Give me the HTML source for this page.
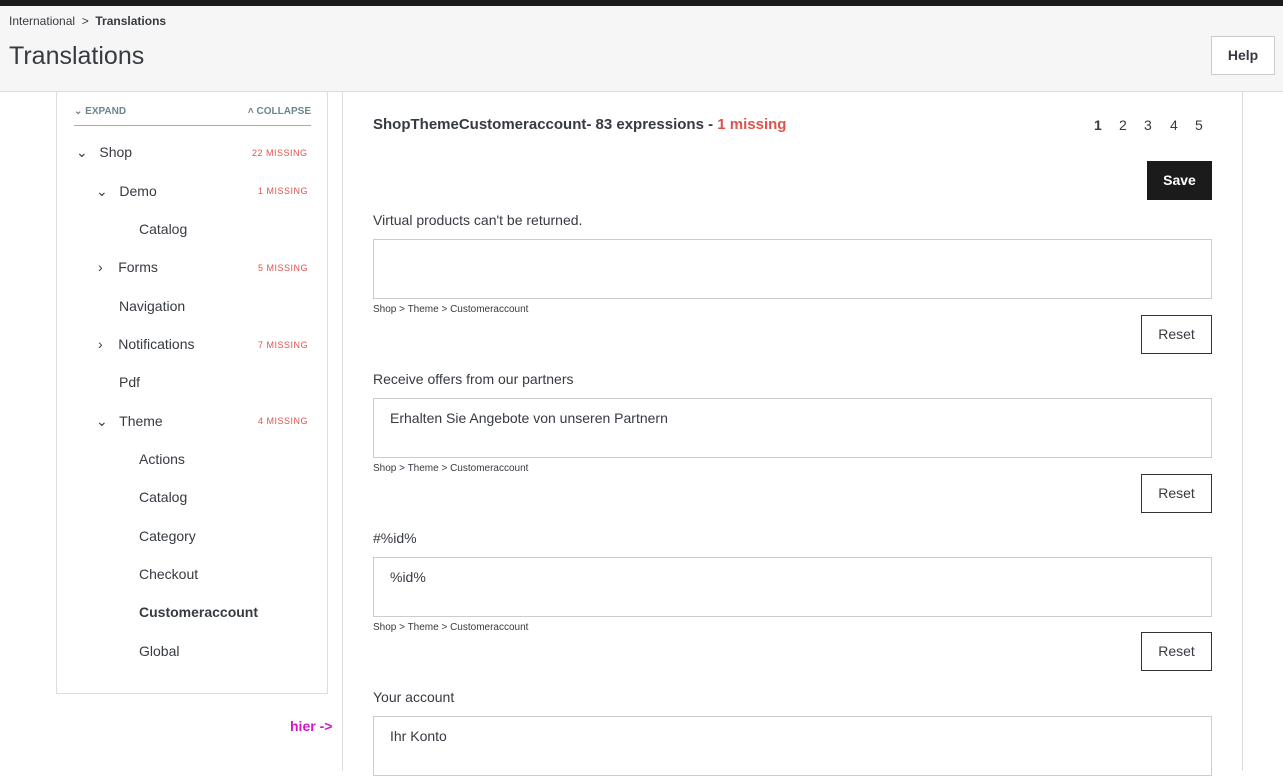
<!DOCTYPE html><html><head><style>
*{box-sizing:border-box;margin:0;padding:0}
body{width:1283px;height:770px;overflow:hidden;background:#fff;font-family:"Liberation Sans",sans-serif;color:#363a41;position:relative}
.a{position:absolute}
.top{left:0;top:0;width:1283px;height:6px;background:#1b1b1b}
.hdr{left:0;top:6px;width:1283px;height:86px;background:#f6f6f6;border-bottom:1px solid #dcdcdc}
.bc{left:9px;top:14px;font-size:12px;color:#363a41}
h1{position:absolute;left:9px;top:42px;font-size:25px;font-weight:normal;color:#363a41}
.help{left:1211px;top:36px;width:64px;height:39px;border:1px solid #ccc;background:#fff;font-size:14px;font-weight:bold;text-align:center;line-height:37px}
.left{left:56px;top:91px;width:272px;height:603px;border:1px solid #ddd;border-top:none}
.ex{left:74px;top:106px;width:237px;height:20px;border-bottom:1px solid #aaa;font-size:10px;font-weight:bold;color:#6c868e}
.it{font-size:14px;color:#363a41}
.ms{right:973px;font-size:9px;color:#e0534b;letter-spacing:.5px}
.chev{font-size:12px}
.main{left:342px;top:91px;width:901px;height:680px;border-left:1px solid #ddd;border-right:1px solid #ddd}
.ttl{left:373px;top:116px;font-size:15px;font-weight:bold}
.pg{top:117px;font-size:14px}
.save{left:1147px;top:161px;width:65px;height:39px;background:#1b1b1b;color:#fff;font-weight:bold;font-size:14px;text-align:center;line-height:39px}
.lbl{left:373px;font-size:14px}
.ta{left:373px;width:839px;height:60px;border:1px solid #ccc;font-size:14px;padding:11px 16px}
.path{left:373px;font-size:10px}
.rst{left:1141px;width:71px;height:39px;border:1px solid #333;font-size:14px;text-align:center;line-height:37px}
</style></head><body>
<div class="a top"></div>
<div class="a hdr"></div>
<div class="a bc">International &nbsp;&gt;&nbsp; <b>Translations</b></div>
<h1>Translations</h1>
<div class="a help">Help</div>
<div class="a left"></div>
<div class="a ex"><span>⌄ EXPAND</span><span style="position:absolute;right:0">˄ COLLAPSE</span></div>

<div class="a it" style="left:76px;top:144px">⌄&nbsp;&nbsp; Shop</div><div class="a ms" style="top:148px;left:252px">22 MISSING</div>
<div class="a it" style="left:96px;top:183px">⌄&nbsp;&nbsp; Demo</div><div class="a ms" style="top:186px;left:258px">1 MISSING</div>
<div class="a it" style="left:139px;top:221px">Catalog</div>
<div class="a it" style="left:98px;top:259px">›&nbsp;&nbsp;&nbsp; Forms</div><div class="a ms" style="top:263px;left:258px">5 MISSING</div>
<div class="a it" style="left:119px;top:298px">Navigation</div>
<div class="a it" style="left:98px;top:336px">›&nbsp;&nbsp;&nbsp; Notifications</div><div class="a ms" style="top:340px;left:258px">7 MISSING</div>
<div class="a it" style="left:119px;top:374px">Pdf</div>
<div class="a it" style="left:96px;top:413px">⌄&nbsp;&nbsp; Theme</div><div class="a ms" style="top:416px;left:258px">4 MISSING</div>
<div class="a it" style="left:139px;top:451px">Actions</div>
<div class="a it" style="left:139px;top:489px">Catalog</div>
<div class="a it" style="left:139px;top:528px">Category</div>
<div class="a it" style="left:139px;top:566px">Checkout</div>
<div class="a it" style="left:139px;top:604px;font-weight:bold">Customeraccount</div>
<div class="a it" style="left:139px;top:643px">Global</div>
<div class="a" style="left:290px;top:718px;font-size:14px;font-weight:bold;color:#d415c9">hier -&gt;</div>

<div class="a main"></div>
<div class="a ttl">ShopThemeCustomeraccount- 83 expressions - <span style="color:#e0534b">1 missing</span></div>
<div class="a pg" style="left:1094px;font-weight:bold">1</div>
<div class="a pg" style="left:1119px">2</div>
<div class="a pg" style="left:1144px">3</div>
<div class="a pg" style="left:1170px">4</div>
<div class="a pg" style="left:1195px">5</div>
<div class="a save">Save</div>

<div class="a lbl" style="top:212px">Virtual products can't be returned.</div>
<div class="a ta" style="top:239px"></div>
<div class="a path" style="top:304px">Shop &gt; Theme &gt; Customeraccount</div>
<div class="a rst" style="top:315px">Reset</div>

<div class="a lbl" style="top:371px">Receive offers from our partners</div>
<div class="a ta" style="top:398px">Erhalten Sie Angebote von unseren Partnern</div>
<div class="a path" style="top:463px">Shop &gt; Theme &gt; Customeraccount</div>
<div class="a rst" style="top:474px">Reset</div>

<div class="a lbl" style="top:530px">#%id%</div>
<div class="a ta" style="top:557px">%id%</div>
<div class="a path" style="top:622px">Shop &gt; Theme &gt; Customeraccount</div>
<div class="a rst" style="top:632px">Reset</div>

<div class="a lbl" style="top:689px">Your account</div>
<div class="a ta" style="top:716px">Ihr Konto</div>
</body></html>
